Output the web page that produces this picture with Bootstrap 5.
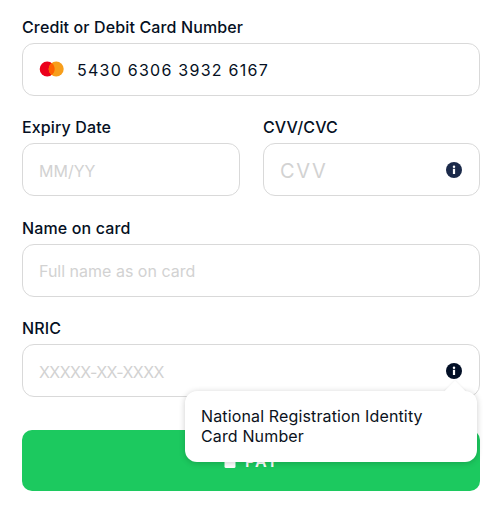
<!doctype html>
<html lang="en"><head><meta charset="utf-8">
<link href="https://cdn.jsdelivr.net/npm/bootstrap@5.3.0/dist/css/bootstrap.min.css" rel="stylesheet">
<style>
html,body{height:100%;overflow:hidden}
body{font-family:Inter,"Liberation Sans",sans-serif;background:#fff;color:#020f26}
.pay-form{padding:15.8px 23px 0 22px;display:flex;flex-direction:column;gap:20.4px;width:503px}
.fld-label{display:block;font-size:16px;font-weight:500;line-height:23.6px;margin:0 0 5px;color:#051023;height:22px;letter-spacing:.13px}
.fld-box{height:53.1px;border:1px solid #d9d9d9;border-radius:12px;background:#fff;padding:0 17px 0 16px;position:relative}
.fld-box input{border:0;outline:0;padding:2px 0 0;flex:1 1 auto;min-width:0;font:400 16px Inter,sans-serif;color:#051023;background:transparent;box-shadow:none}
.fld-box input::placeholder{color:#d2d2d2;opacity:1}
.fld-box input.num-in{letter-spacing:1.25px;padding-top:2px;margin-left:5px}
.fld-box input.cvv-in{font-size:20px;letter-spacing:1.6px}
.fld-box input.nric-in{letter-spacing:-.6px}
.two-col{display:grid;grid-template-columns:218px 217px;gap:23px}
.pay-btn{height:61px;border-radius:10px;background:#1cc95f;border:0;color:#fff;font-weight:600;font-size:16px;margin-top:12.4px;width:100%;letter-spacing:1px}
.nric-wrap{position:relative}
.tip-box{position:absolute;left:163px;top:73.9px;width:292px;height:70.8px;background:#fff;border-radius:12px;box-shadow:0 1px 6px rgba(0,0,0,.2);padding:15.9px 40px 16px 16px;font-size:16px;line-height:19.5px;color:#0b1220;letter-spacing:.14px;z-index:5}
.tip-box::before{content:"";position:absolute;right:14px;top:-7px;width:16px;height:16px;background:#fff;transform:rotate(45deg);box-shadow:-1px -1px 2px rgba(0,0,0,.04)}
.tip-txt{position:relative}
.info-ico{flex:none;display:block}
.mc-ico{flex:none;display:block}
</style></head>
<body>
<form class="pay-form">
<div>
<label class="fld-label">Credit or Debit Card Number</label>
<div class="fld-box d-flex align-items-center gap-2">
<svg class="mc-ico" width="25" height="16" viewBox="0 0 25 16" aria-hidden="true"><circle cx="8.2" cy="8" r="7.5" fill="#eb001b"/><circle cx="17.2" cy="8" r="7.5" fill="#f79e1b"/><path d="M12.7 2a7.5 7.5 0 0 1 0 12a7.5 7.5 0 0 1 0-12z" fill="#ff5f00"/></svg>
<input class="num-in" value="5430 6306 3932 6167">
</div>
</div>
<div class="two-col">
<div>
<label class="fld-label">Expiry Date</label>
<div class="fld-box d-flex align-items-center"><input placeholder="MM/YY"></div>
</div>
<div>
<label class="fld-label">CVV/CVC</label>
<div class="fld-box d-flex align-items-center">
<input class="cvv-in" placeholder="CVV">
<svg class="info-ico" width="16" height="16" viewBox="0 0 16 16" aria-hidden="true"><circle cx="8" cy="8" r="8" fill="#1b2a4a"/><rect x="6.9" y="6.8" width="2.2" height="5.2" fill="#fff"/><circle cx="8" cy="4.7" r="1.25" fill="#fff"/></svg>
</div>
</div>
</div>
<div>
<label class="fld-label">Name on card</label>
<div class="fld-box d-flex align-items-center"><input placeholder="Full name as on card"></div>
</div>
<div class="nric-wrap">
<label class="fld-label">NRIC</label>
<div class="fld-box d-flex align-items-center">
<input class="nric-in" placeholder="XXXXX-XX-XXXX">
<svg class="info-ico" width="16" height="16" viewBox="0 0 16 16" aria-hidden="true"><circle cx="8" cy="8" r="8" fill="#020f26"/><rect x="6.9" y="6.8" width="2.2" height="5.2" fill="#fff"/><circle cx="8" cy="4.7" r="1.25" fill="#fff"/></svg>
</div>
<div class="tip-box"><div class="tip-txt">National Registration Identity Card Number</div></div>
</div>
<button type="button" class="btn pay-btn d-flex align-items-center justify-content-center gap-2">
<svg width="14" height="16" viewBox="0 0 14 16" aria-hidden="true"><path d="M3.5 7V4.5a3.5 3.5 0 0 1 7 0V7" fill="none" stroke="#fff" stroke-width="1.6"/><rect x="1.5" y="7" width="11" height="8" rx="1.5" fill="#fff"/></svg>
<span>PAY</span></button>
</form>
</body></html>
